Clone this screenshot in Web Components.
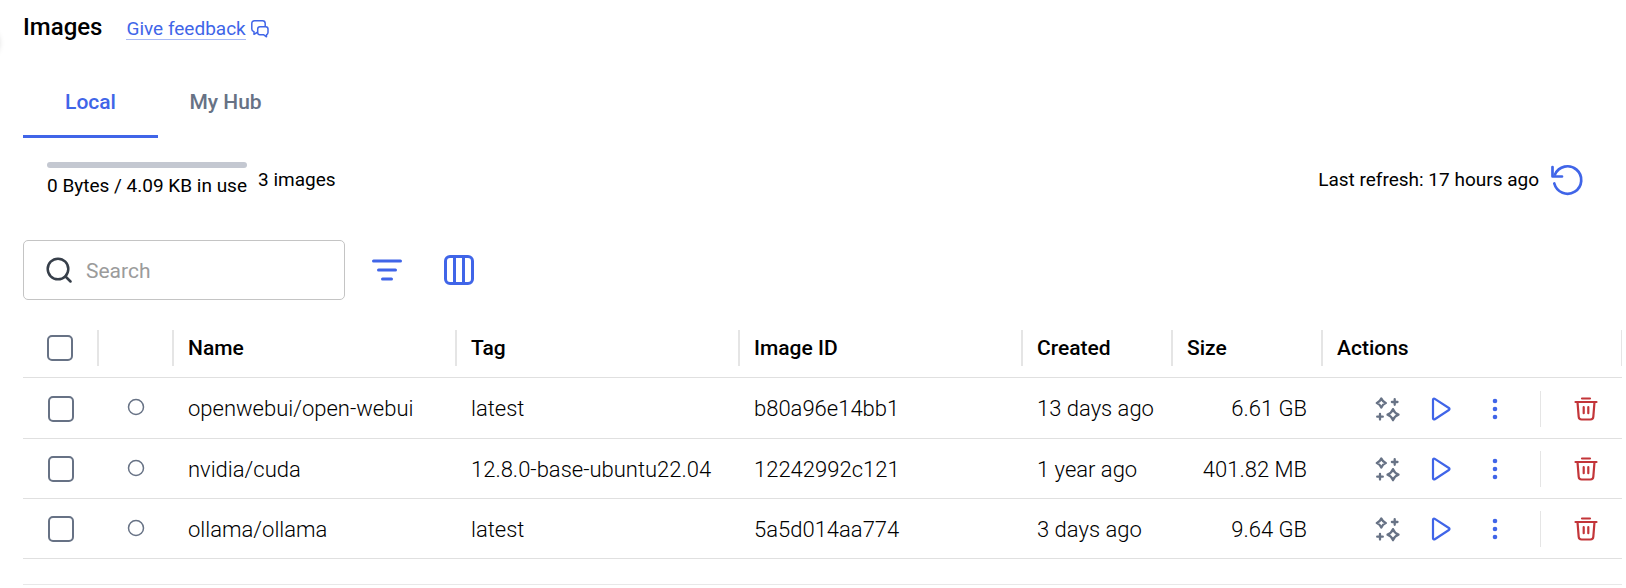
<!DOCTYPE html>
<html lang="en">
<head>
<meta charset="utf-8">
<meta name="viewport" content="width=device-width, initial-scale=1">
<title>Images</title>
<style>
  body {
    margin: 0;
    background: #fff;
    color: #000;
    font-family: Roboto, "Liberation Sans", sans-serif;
    font-size: 18px;
    --primary: #4065e8;
    --muted: #677285;
    --danger: #c33539;
    --line: #e0e0e0;
  }
</style>
</head>
<body>
<images-page>
  <page-heading slot="heading" label="Images">
    <feedback-link>Give feedback</feedback-link>
  </page-heading>
  <tab-bar slot="tabs">
    <tab-item selected>Local</tab-item>
    <tab-item>My Hub</tab-item>
  </tab-bar>
  <status-bar slot="status">
    <usage-meter value="0">0 Bytes / 4.09 KB in use</usage-meter>
    <span>3 images</span>
    <span slot="refresh">Last refresh: 17 hours ago</span>
  </status-bar>
  <table-toolbar slot="toolbar"></table-toolbar>
  <image-table></image-table>
</images-page>

<script>
// name: [width, height, markup]
const ICONS = {
  chat: [20, 20, `<g stroke-width="1.5">
    <path d="M7 13.500l-3 1.800v-2.500C2.600 12.400 1.800 11.400 1.800 10V4.500c0-1.700 1-2.700 2.700-2.700h8c1.700 0 2.700 1 2.700 2.700V7"/>
    <path d="M10 7.800h5.700c1.400 0 2.300.9 2.300 2.300v3.400c0 1.100-.6 1.900-1.500 2.200v2.100l-2.700-2H10c-1.400 0-2.300-.9-2.300-2.300v-3.400c0-1.400.9-2.300 2.300-2.300z"/></g>`],
  refresh: [34, 34, `<g stroke-width="2.700"><path d="M4.300 20.500A13.700 13.700 0 1 0 5 11.500"/><path d="M2.500 4v9.500h9.500"/></g>`],
  search: [26, 26, `<g stroke-width="2.500"><circle cx="12" cy="12" r="10.300"/><path d="M19.500 19.500l5 5"/></g>`],
  filter: [32, 32, `<g stroke-width="3"><path d="M2.500 7h27M7.500 16h17M11.500 25h9"/></g>`],
  columns: [32, 32, `<g stroke-width="3"><rect x="2.500" y="2.500" width="27" height="27" rx="4.500"/><path d="M11.500 3v26M20.500 3v26"/></g>`],
  sparkles: [26, 26, `<g stroke-width="2.300">
    <path d="M7.300 2.500Q8.600 5.700 11.800 7Q8.600 8.300 7.300 11.500Q6 8.300 2.800 7Q6 5.700 7.300 2.500z"/>
    <path d="M19 13.200Q20.500 17.200 24.500 18.700Q20.500 20.200 19 24.200Q17.500 20.200 13.500 18.700Q17.500 17.200 19 13.200z"/>
    <path d="M20.700 3.200v5.600M17.900 6h5.600M6 17.900v5.600M3.200 20.700h5.600"/></g>`],
  play: [26, 26, `<path stroke-width="2.200" d="M5 3.800v18.400c0 1 1 1.500 1.800 1L20.900 14c.8-.5.8-1.500 0-2L6.800 2.800C6 2.300 5 2.800 5 3.800z"/>`],
  more: [26, 26, `<g fill="currentColor" stroke="none"><circle cx="13" cy="5" r="2.300"/><circle cx="13" cy="13" r="2.300"/><circle cx="13" cy="21" r="2.300"/></g>`],
  trash: [26, 26, `<g stroke-width="2.200"><path d="M9 2.500h8M2.500 6h21"/><path d="M4.500 6l1.200 14.800c.1 1.800 1.200 2.700 2.900 2.700h8.800c1.700 0 2.800-.9 2.900-2.700L21.500 6"/><path d="M10.700 11.200v6M15.300 11.200v6"/></g>`],
  unused: [18, 18, `<circle stroke-width="1.500" cx="9" cy="9" r="7.500"/>`]
};

class AppIcon extends HTMLElement {
  constructor() {
    super();
    this.attachShadow({ mode: 'open' });
  }

  connectedCallback() {
    const [w, h, body] = ICONS[this.getAttribute('name')];
    this.shadowRoot.innerHTML = `
      <style>
        :host { display: inline-flex; flex: none; }
        svg { display: block; }
      </style>
      <svg width="${w}" height="${h}" viewBox="0 0 ${w} ${h}" fill="none" stroke="currentColor"
        stroke-linecap="round" stroke-linejoin="round" aria-hidden="true">${body}</svg>
    `;
  }
}

class ImagesPage extends HTMLElement {
  constructor() {
    super();
    this.attachShadow({ mode: 'open' }).innerHTML = `
      <style>
        :host {
          display: block;
          position: relative;
          overflow: hidden;
          padding: 11px 4px 0 23px;
        }
        /* round sidebar toggle, its shadow reaches into the page */
        .edge {
          position: absolute;
          left: -28px;
          top: 30px;
          width: 26px;
          height: 26px;
          border-radius: 50%;
          box-shadow: 0 0 6px rgba(0,0,0,0.25);
        }
        main { display: flex; flex-direction: column; }
        .foot { border-bottom: 1px solid #e8e8e8; height: 25px; }
      </style>
      <div class="edge"></div>
      <main>
        <slot name="heading"></slot>
        <slot name="tabs"></slot>
        <slot name="status"></slot>
        <slot name="toolbar"></slot>
        <slot></slot>
        <div class="foot"></div>
      </main>
    `;
  }
}

class PageHeading extends HTMLElement {
  constructor() {
    super();
    this.attachShadow({ mode: 'open' }).innerHTML = `
      <style>
        :host { display: flex; align-items: center; gap: 24px; height: 32px; }
        h1 { margin: 0; font-size: 24px; font-weight: 500; line-height: 32px; }
      </style>
      <h1></h1>
      <slot></slot>
    `;
  }

  connectedCallback() {
    this.shadowRoot.querySelector('h1').textContent = this.getAttribute('label');
  }
}

class FeedbackLink extends HTMLElement {
  constructor() {
    super();
    this.attachShadow({ mode: 'open' }).innerHTML = `
      <style>
        :host { display: block; padding-top: 4px; }
        a {
          display: flex;
          align-items: center;
          gap: 4px;
          color: var(--primary);
          font-size: 19px;
          line-height: 20px;
          text-decoration: none;
        }
        span { border-bottom: 1px solid #a9baf5; }
      </style>
      <a href="#feedback"><span><slot></slot></span><app-icon name="chat"></app-icon></a>
    `;
  }
}

class TabBar extends HTMLElement {
  constructor() {
    super();
    this.attachShadow({ mode: 'open' }).innerHTML = `
      <style>
        :host { display: flex; margin-top: 23px; }
      </style>
      <slot></slot>
    `;
  }

  connectedCallback() {
    this.setAttribute('role', 'tablist');
    this.addEventListener('click', (e) => {
      const tab = e.target.closest('tab-item');
      if (!tab) return;
      this.querySelectorAll('tab-item').forEach((t) => t.toggleAttribute('selected', t === tab));
    });
  }
}

class TabItem extends HTMLElement {
  constructor() {
    super();
    this.attachShadow({ mode: 'open' }).innerHTML = `
      <style>
        :host { display: block; }
        button {
          min-width: 135px;
          height: 72px;
          padding: 3px 24px 0;
          border: none;
          border-bottom: 3px solid transparent;
          background: none;
          color: var(--muted);
          font: 500 21px/24px Roboto, sans-serif;
          cursor: pointer;
        }
        :host([selected]) button { color: var(--primary); border-color: var(--primary); }
      </style>
      <button type="button" role="tab"><slot></slot></button>
    `;
  }
}

class StatusBar extends HTMLElement {
  constructor() {
    super();
    this.attachShadow({ mode: 'open' }).innerHTML = `
      <style>
        :host {
          display: flex;
          align-items: center;
          justify-content: space-between;
          height: 36px;
          margin-top: 24px;
          padding: 0 38px 0 24px;
          font-size: 19px;
          line-height: 24px;
        }
        div { display: flex; align-items: center; gap: 11px; }
        button {
          display: flex;
          padding: 0;
          border: none;
          background: none;
          color: var(--primary);
          cursor: pointer;
        }
      </style>
      <div><slot></slot></div>
      <div>
        <slot name="refresh"></slot>
        <button type="button" aria-label="Refresh"><app-icon name="refresh"></app-icon></button>
      </div>
    `;
  }
}

class UsageMeter extends HTMLElement {
  constructor() {
    super();
    this.attachShadow({ mode: 'open' }).innerHTML = `
      <style>
        :host { display: flex; flex-direction: column; gap: 6px; }
        .track { height: 6px; border-radius: 3px; background: #c4c8d1; overflow: hidden; }
        .fill { height: 100%; background: var(--primary); }
      </style>
      <div class="track"><div class="fill"></div></div>
      <slot></slot>
    `;
  }

  connectedCallback() {
    this.shadowRoot.querySelector('.fill').style.width = this.getAttribute('value') + '%';
  }
}

class TableToolbar extends HTMLElement {
  constructor() {
    super();
    this.attachShadow({ mode: 'open' }).innerHTML = `
      <style>
        :host { display: flex; align-items: center; gap: 26px; margin-top: 42px; }
        label {
          display: flex;
          align-items: center;
          gap: 14px;
          box-sizing: border-box;
          width: 322px;
          height: 60px;
          padding: 0 22px;
          border: 1px solid #c4c4c4;
          border-radius: 5px;
          color: #373f4a;
        }
        input {
          flex: 1;
          min-width: 0;
          padding: 2px 0 0;
          border: none;
          outline: none;
          background: none;
          font: 400 21px/24px Roboto, sans-serif;
        }
        input::placeholder { color: #9b9b9b; opacity: 1; }
        .tools { display: flex; gap: 40px; }
        button {
          display: flex;
          padding: 0;
          border: none;
          background: none;
          color: var(--primary);
          cursor: pointer;
        }
      </style>
      <label>
        <app-icon name="search"></app-icon>
        <input type="text" placeholder="Search" aria-label="Search">
      </label>
      <div class="tools">
        <button type="button" aria-label="Filter"><app-icon name="filter"></app-icon></button>
        <button type="button" aria-label="Columns"><app-icon name="columns"></app-icon></button>
      </div>
    `;
  }
}

const IMAGES = [
  { name: 'openwebui/open-webui', tag: 'latest', id: 'b80a96e14bb1', created: '13 days ago', size: '6.61 GB' },
  { name: 'nvidia/cuda', tag: '12.8.0-base-ubuntu22.04', id: '12242992c121', created: '1 year ago', size: '401.82 MB' },
  { name: 'ollama/ollama', tag: 'latest', id: '5a5d014aa774', created: '3 days ago', size: '9.64 GB' }
];

class ImageTable extends HTMLElement {
  constructor() {
    super();
    this.attachShadow({ mode: 'open' });
  }

  connectedCallback() {
    this.shadowRoot.innerHTML = `
      <style>
        :host { display: block; margin-top: 17px; }
        table {
          width: 100%;
          border-collapse: separate;
          border-spacing: 0;
          table-layout: fixed;
          font-size: 21px;
          line-height: 24px;
        }
        .check, .state { width: 75px; }
        .created, .size { width: 150px; }
        .actions { width: 300px; }
        th, td {
          box-sizing: border-box;
          height: 60px;
          padding: 0;
          border-bottom: 1px solid var(--line);
          text-align: left;
          white-space: nowrap;
        }
        th { height: 61px; padding-top: 2px; font-weight: 500; }
        th div {
          display: flex;
          align-items: center;
          height: 36px;
          margin-right: -1px;
          padding-left: 15px;
          border-right: 2px solid #e5e5e5;
        }
        th:last-child div { margin-right: 0; border-right-width: 1px; }
        td { padding: 2px 15px 0; font-size: 22px; font-weight: 300; }
        tbody tr:first-child td { height: 61px; }
        td.num { text-align: right; }
        td.box, td.dot, td.tools { padding: 1px 0 0; }
        th.box div { justify-content: center; padding: 0; }
        td.box { text-align: center; }
        input {
          appearance: none;
          display: inline-block;
          vertical-align: middle;
          box-sizing: border-box;
          width: 26px;
          height: 26px;
          margin: 0;
          border: 2px solid var(--muted);
          border-radius: 5px;
        }
        input:checked { background: var(--primary); border-color: var(--primary); }
        .dot app-icon { display: flex; justify-content: center; padding-bottom: 3px; color: var(--muted); }
        .row { display: flex; align-items: center; justify-content: flex-end; gap: 28px; padding-right: 23px; }
        .row hr { width: 1px; height: 36px; margin: 0 4px; border: none; background: #e5e5e5; }
        button {
          display: flex;
          padding: 0;
          border: none;
          background: none;
          color: var(--primary);
          cursor: pointer;
        }
        button.ask { color: var(--muted); }
        button.delete { color: var(--danger); }
      </style>
      <table>
        <colgroup>
          <col class="check"><col class="state"><col><col><col>
          <col class="created"><col class="size"><col class="actions">
        </colgroup>
        <thead>
          <tr>
            <th class="box"><div><input type="checkbox" aria-label="Select all"></div></th>
            <th><div></div></th>
            <th><div>Name</div></th>
            <th><div>Tag</div></th>
            <th><div>Image ID</div></th>
            <th><div>Created</div></th>
            <th><div>Size</div></th>
            <th><div>Actions</div></th>
          </tr>
        </thead>
        <tbody>${IMAGES.map((img) => this.row(img)).join('')}</tbody>
      </table>
    `;
  }

  row(img) {
    return `
      <tr>
        <td class="box"><input type="checkbox" aria-label="Select ${img.name}"></td>
        <td class="dot"><app-icon name="unused"></app-icon></td>
        <td>${img.name}</td>
        <td>${img.tag}</td>
        <td>${img.id}</td>
        <td>${img.created}</td>
        <td class="num">${img.size}</td>
        <td class="tools">
          <div class="row">
            <button type="button" class="ask" aria-label="Ask AI"><app-icon name="sparkles"></app-icon></button>
            <button type="button" aria-label="Run"><app-icon name="play"></app-icon></button>
            <button type="button" aria-label="More"><app-icon name="more"></app-icon></button>
            <hr>
            <button type="button" class="delete" aria-label="Delete"><app-icon name="trash"></app-icon></button>
          </div>
        </td>
      </tr>
    `;
  }
}

customElements.define('app-icon', AppIcon);
customElements.define('images-page', ImagesPage);
customElements.define('page-heading', PageHeading);
customElements.define('feedback-link', FeedbackLink);
customElements.define('tab-bar', TabBar);
customElements.define('tab-item', TabItem);
customElements.define('status-bar', StatusBar);
customElements.define('usage-meter', UsageMeter);
customElements.define('table-toolbar', TableToolbar);
customElements.define('image-table', ImageTable);
</script>
</body>
</html>
